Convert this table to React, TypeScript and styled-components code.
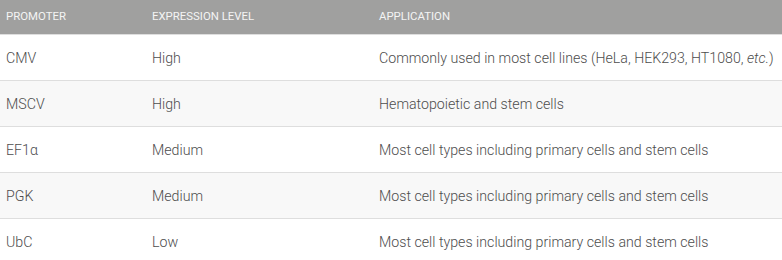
import React from "react";
import styled, { createGlobalStyle } from "styled-components";

const Global = createGlobalStyle`
  html, body { margin: 0; padding: 0; background: #ffffff; }
  body { font-family: Roboto, "Liberation Sans", sans-serif; }
`;

const Table = styled.table`
  width: 782px;
  border-collapse: collapse;
  table-layout: fixed;
  font-family: Roboto, "Liberation Sans", sans-serif;
`;

const HeadRow = styled.tr`
  background: #a0a09f;
  height: 34px;
`;

const Th = styled.th<{ $w?: number }>`
  width: ${(p) => (p.$w ? `${p.$w}px` : "auto")};
  padding: 0 0 1px 6px;
  text-align: left;
  font-weight: 400;
  font-size: 11.4px;
  color: #f4f4f4;
  text-transform: uppercase;
  vertical-align: middle;
`;

const Row = styled.tr<{ $alt: boolean }>`
  height: 46px;
  border-top: 1px solid #dedede;
  background: ${(p) => (p.$alt ? "#f8f8f8" : "#ffffff")};
`;

const Td = styled.td`
  padding: 2px 0 0 6px;
  font-size: 14.2px;
  font-weight: 300;
  color: #4d4d4d;
  white-space: nowrap;
  vertical-align: middle;
`;

const rows: { p: string; e: string; a: React.ReactNode }[] = [
  {
    p: "CMV",
    e: "High",
    a: (
      <>
        Commonly used in most cell lines (HeLa, HEK293, HT1080, <em>etc.</em>)
      </>
    ),
  },
  { p: "MSCV", e: "High", a: "Hematopoietic and stem cells" },
  { p: "EF1α", e: "Medium", a: "Most cell types including primary cells and stem cells" },
  { p: "PGK", e: "Medium", a: "Most cell types including primary cells and stem cells" },
  { p: "UbC", e: "Low", a: "Most cell types including primary cells and stem cells" },
];

export default function App() {
  return (
    <>
      <Global />
      <Table>
        <thead>
          <HeadRow>
            <Th $w={140}>Promoter</Th>
            <Th $w={221}>Expression Level</Th>
            <Th>Application</Th>
          </HeadRow>
        </thead>
        <tbody>
          {rows.map((r, i) => (
            <Row key={r.p} $alt={i % 2 === 1}>
              <Td>{r.p}</Td>
              <Td>{r.e}</Td>
              <Td>{r.a}</Td>
            </Row>
          ))}
        </tbody>
      </Table>
    </>
  );
}
